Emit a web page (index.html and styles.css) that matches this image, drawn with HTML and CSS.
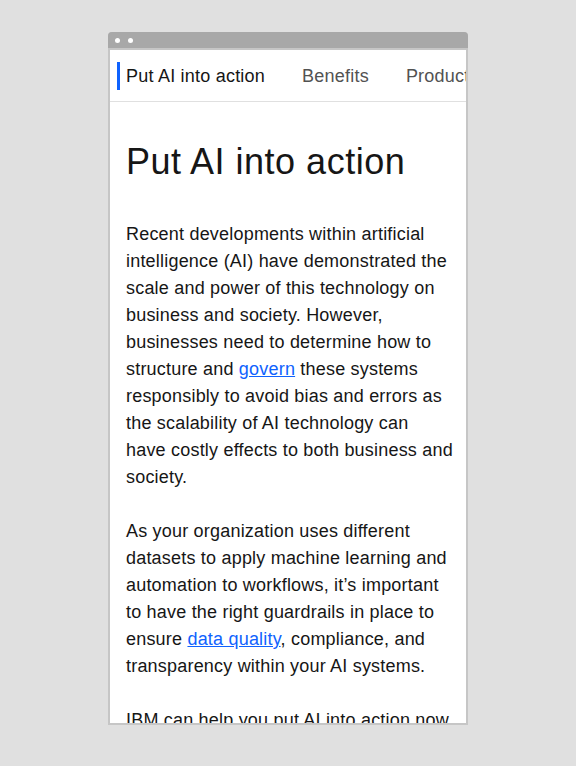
FILE: index.html
```html
<!DOCTYPE html>
<html lang="en">
<head>
<meta charset="utf-8">
<title>Put AI into action</title>
<link rel="stylesheet" href="styles.css">
</head>
<body>
<div class="frame">
  <div class="titlebar">
    <span class="dot"></span>
    <span class="dot"></span>
  </div>
  <div class="viewport">
    <nav class="tabs">
      <span class="tab tab-active">Put AI into action</span>
      <span class="tab">Benefits</span>
      <span class="tab">Products</span>
    </nav>
    <main class="content">
      <h1 class="heading">Put AI into action</h1>
      <p class="para">Recent developments within artificial intelligence (AI) have demonstrated the scale and power of this technology on business and society. However, businesses need to determine how to structure and <a class="link" href="#">govern</a> these systems responsibly to avoid bias and errors as the scalability of AI technology can<br>have costly effects to both business and society.</p>
      <p class="para">As your organization uses different datasets to apply machine learning and automation to workflows, it’s important to have the right guardrails in place to ensure <a class="link" href="#">data quality</a>, compliance, and transparency within your AI systems.</p>
      <p class="para">IBM can help you put AI into action now by focusing on the areas of your business where AI can deliver real value.</p>
    </main>
  </div>
</div>
</body>
</html>
```
FILE: styles.css
```css
html, body {
  margin: 0;
  padding: 0;
}
body {
  background: #e0e0e0;
  height: 766px;
  overflow: hidden;
  font-family: "Liberation Sans", Arial, sans-serif;
  color: #161616;
}
.frame {
  margin: 32px 0 0 108px;
  width: 360px;
  height: 693px;
  background: #c6c6c6;
  border-radius: 4px 4px 0 0;
  overflow: hidden;
  display: flex;
  flex-direction: column;
}
.titlebar {
  height: 16px;
  background: #a8a8a8;
  display: flex;
  align-items: center;
  gap: 8px;
  padding-left: 7px;
  flex-shrink: 0;
}
.dot {
  width: 5px;
  height: 5px;
  border-radius: 50%;
  background: #ffffff;
}
.viewport {
  margin: 2px 2px 2px 2px;
  background: #ffffff;
  flex: 1;
  overflow: hidden;
}
.tabs {
  height: 51px;
  border-bottom: 1px solid #e0e0e0;
  display: flex;
  align-items: center;
  gap: 37px;
  padding-left: 7px;
  white-space: nowrap;
  overflow: hidden;
}
.tab {
  font-size: 18px;
  color: #525252;
  line-height: 28px;
  letter-spacing: 0.22px;
  flex-shrink: 0;
}
.tab-active {
  color: #161616;
  border-left: 3px solid #0f62fe;
  padding-left: 6px;
}
.content {
  padding: 38px 10px 0 16px;
}
.heading {
  margin: 0;
  font-size: 36px;
  line-height: 44px;
  font-weight: 400;
  letter-spacing: 0.5px;
  color: #161616;
}
.para {
  margin: 37px 0 0 0;
  font-size: 18px;
  line-height: 27px;
  letter-spacing: 0.2px;
  color: #161616;
}
.para + .para {
  margin-top: 27px;
}
.link {
  color: #0f62fe;
  text-decoration: underline;
}
```
